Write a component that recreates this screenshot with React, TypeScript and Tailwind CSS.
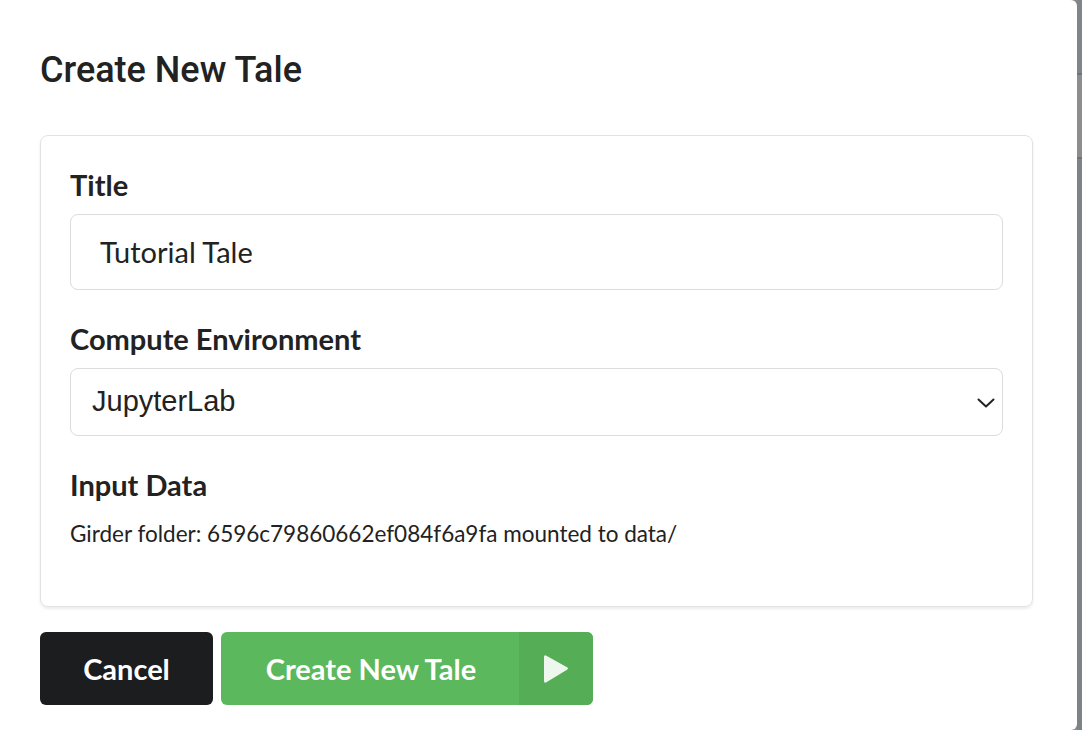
const lato = { fontFamily: 'Lato, "Open Sans", sans-serif' }

export default function App() {
  return (
    <div className="flex h-[730px] w-[1082px] overflow-hidden bg-[#8a8c8d]">
      <div className="flex h-full w-[1077px] flex-col rounded-r-[6px] bg-white px-10" style={lato}>
        <h1
          className="mt-[49px] text-[36px] leading-[42px] font-medium text-[#222222]"
          style={{ fontFamily: 'Roboto, sans-serif' }}
        >
          Create New Tale
        </h1>

        <div className="mt-[44px] flex h-[472px] w-[993px] flex-col rounded-lg border border-[#e2e2e2] px-[29px] pt-[32px] shadow-[0_2px_3px_rgba(0,0,0,0.08)]">
          <label className="text-[29px] leading-[34px] font-bold text-[#222222]">Title</label>
          <div className="mt-[12px] flex h-[76px] items-center rounded-lg border border-[#dcdcdc] px-[29px] text-[29px] text-[#222222]">
            Tutorial Tale
          </div>

          <label className="mt-[32px] text-[29px] leading-[34px] font-bold text-[#222222]">
            Compute Environment
          </label>
          <div className="mt-[12px] flex h-[68px] items-center justify-between rounded-lg border border-[#dcdcdc] pr-[7px] pl-[21px]">
            <span className="text-[29px] text-[#222222]" style={{ fontFamily: '"Liberation Sans", Arial, sans-serif' }}>
              JupyterLab
            </span>
            <svg width="18" height="10" viewBox="0 0 18 10" className="mt-[2px]">
              <path d="M1.5 1.5 L9 8.5 L16.5 1.5" fill="none" stroke="#222222" strokeWidth="2" strokeLinecap="round" strokeLinejoin="round" />
            </svg>
          </div>

          <label className="mt-[32px] text-[29px] leading-[34px] font-bold text-[#222222]">Input Data</label>
          <p className="mt-[18px] text-[22.5px] leading-[28px] text-[#222222]">
            Girder folder: 6596c79860662ef084f6a9fa mounted to data/
          </p>
        </div>

        <div className="mt-[25px] flex gap-[8px]">
          <button className="h-[73px] w-[173px] rounded-[6px] bg-[#1c1d1f] text-[29px] font-bold text-white">
            Cancel
          </button>
          <button className="flex h-[73px] w-[372px] overflow-hidden rounded-[6px] bg-[#5cb85c] text-[29px] font-bold text-white">
            <span className="flex h-full flex-1 items-center justify-center pl-[2px]">Create New Tale</span>
            <span className="flex h-full w-[74px] items-center justify-center bg-[#55ad55]">
              <svg width="26" height="30" viewBox="0 0 26 30">
                <path
                  d="M3.4 1.7 L24 13.3 Q26 14.5 24 15.7 L3.4 28.3 Q1 29.6 1 27 L1 3 Q1 0.4 3.4 1.7 Z"
                  fill="#eef7ee"
                />
              </svg>
            </span>
          </button>
        </div>
      </div>
      <div className="flex w-[5px] flex-col">
        <div className="h-[73px] bg-[#818587]" />
        <div className="h-[2px] bg-[#6f7375]" />
        <div className="h-[82px] bg-[#8d8d8d]" />
        <div className="h-[2px] bg-[#6f7375]" />
        <div className="flex-1 bg-[#7f8385]" />
      </div>
    </div>
  )
}
